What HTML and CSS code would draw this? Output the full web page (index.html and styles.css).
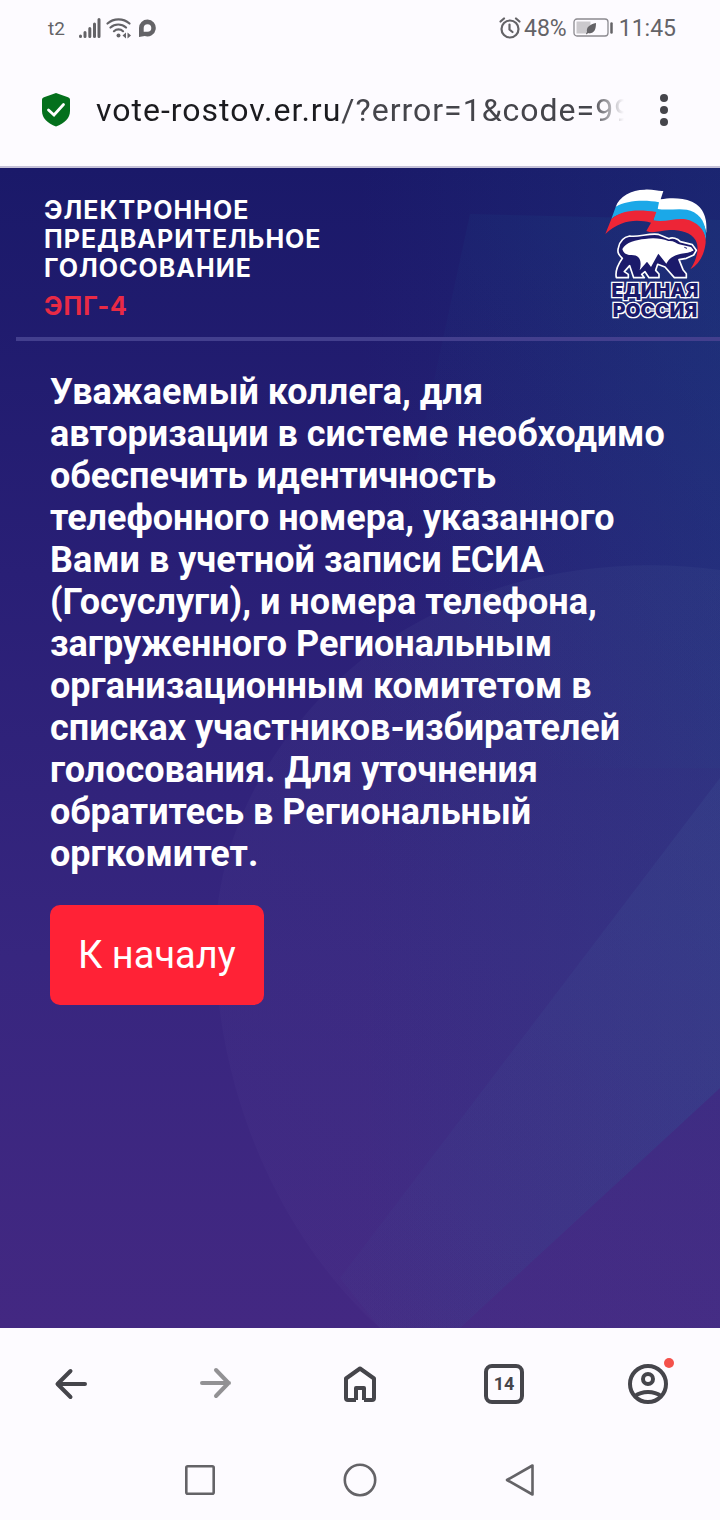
FILE: index.html
```html
<!DOCTYPE html>
<html lang="ru">
<head>
    <meta charset="UTF-8">
    <title>Электронное предварительное голосование</title>
    <meta name="viewport" content="width=device-width, initial-scale=1.0">
    <link rel="stylesheet" href="styles.css">
</head>
<body>
    <div class="status-bar">
        <div class="status-left">
            <span class="carrier">t2</span>
            <svg class="signal" width="22" height="22" viewBox="0 0 22 22" stroke="currentColor" stroke-width="3" stroke-linecap="round">
                <path d="M1.5 19v.5M6 15.500v4M10.800 11.500v8M15.500 7v12.500M20 2.500v17"/>
            </svg>
            <svg width="26" height="22" viewBox="0 0 26 22" fill="none" stroke="currentColor" stroke-width="2.200" stroke-linecap="round">
                <path d="M1.500 6.500a16.500 16.500 0 0 1 22 0M4.500 10.500a11.500 11.500 0 0 1 15.500 0M8 14.200a6.600 6.600 0 0 1 9 0"/>
                <circle cx="12.500" cy="18.500" r="2" fill="currentColor" stroke="none"/>
                <path d="M16.500 18.500l3.500-3v6zM25 18.500l-3.500-3v6z" fill="currentColor" stroke="none"/>
            </svg>
            <svg width="20" height="20" viewBox="0 0 20 20">
                <path d="M10.500 1.500a8.500 8.500 0 1 1-2.800 16.600L2 19V10A8.500 8.500 0 0 1 10.500 1.500zm0 4.700a3.800 3.800 0 0 0-3.800 3.800v3.800h3.800a3.800 3.800 0 0 0 0-7.600z" fill="currentColor"/>
            </svg>
        </div>
        <div class="status-right">
            <svg width="22" height="24" viewBox="0 0 22 24" fill="none" stroke="currentColor" stroke-width="2.200" stroke-linecap="round">
                <circle cx="11" cy="13" r="8.500"/>
                <path d="M10.500 8.500v5l3 2.500M1.500 5.500l3.500-3M20.500 5.500l-3.500-3"/>
            </svg>
            <span>48%</span>
            <svg class="battery" width="40" height="20" viewBox="0 0 40 20">
                <rect x="1" y="1" width="34" height="17" rx="3" fill="none" stroke="#8c8a90" stroke-width="1.300"/>
                <rect x="3.500" y="3.500" width="14" height="12" fill="#cbc9cd"/>
                <path d="M23 5c0 7-2 11-8 10l-1.500 1.500-.5-1 1-1.500c-1-5 3-7.500 9-9z" fill="currentColor"/>
                <path d="M38.500 5.500v9" stroke="currentColor" stroke-width="2.500" stroke-linecap="round"/>
            </svg>
            <span>11:45</span>
        </div>
    </div>

    <div class="address-bar">
        <svg width="32" height="36" viewBox="0 0 32 36">
            <path d="M16 1l12 4.300c1.300.5 2 1.200 2 2.700v11c0 7-5.500 12.500-14 15.500C7.500 31.500 2 26 2 19V8c0-1.500.7-2.200 2-2.700z" fill="#04701c"/>
            <path d="M8.500 18l5.500 5 9.500-10.500" fill="none" stroke="#fff" stroke-width="2.800" stroke-linecap="round"/>
        </svg>
        <div class="url"><span class="host">vote-rostov.er.ru</span>/?error=1&amp;code=99</div>
        <button class="menu" type="button" aria-label="Меню">
            <svg width="8" height="32" viewBox="0 0 8 32" fill="currentColor">
                <circle cx="4" cy="4" r="4"/>
                <circle cx="4" cy="16" r="4"/>
                <circle cx="4" cy="28" r="4"/>
            </svg>
        </button>
    </div>

    <main>
        <svg class="backdrop" viewBox="0 0 720 1160" preserveAspectRatio="none">
            <defs>
                <linearGradient id="glow" gradientUnits="userSpaceOnUse" x1="360" y1="0" x2="760" y2="0">
                    <stop offset="0" stop-color="#1c4a88" stop-opacity="0"/>
                    <stop offset="1" stop-color="#1c4a88" stop-opacity=".28"/>
                </linearGradient>
                <linearGradient id="ray" gradientUnits="userSpaceOnUse" x1="400" y1="340" x2="720" y2="170">
                    <stop offset="0" stop-color="#1c4a88" stop-opacity="0"/>
                    <stop offset="1" stop-color="#1c4a88" stop-opacity=".22"/>
                </linearGradient>
                <linearGradient id="disc" gradientUnits="userSpaceOnUse" x1="215" y1="900" x2="720" y2="500">
                    <stop offset="0" stop-color="#5a4a9a" stop-opacity=".1"/>
                    <stop offset="1" stop-color="#4a5a96" stop-opacity=".15"/>
                </linearGradient>
                <linearGradient id="band" gradientUnits="userSpaceOnUse" x1="350" y1="1100" x2="720" y2="700">
                    <stop offset="0" stop-color="#405898" stop-opacity=".06"/>
                    <stop offset="1" stop-color="#405898" stop-opacity=".2"/>
                </linearGradient>
            </defs>
            <path d="M360 0H720V920L460 1160H360z" fill="url(#glow)"/>
            <path d="M470 46L720 52V600H350z" fill="url(#ray)"/>
            <path d="M720 402C600 385 440 410 330 520C250 600 215 690 215 780C218 940 290 1080 380 1160H720z" fill="url(#disc)"/>
            <path d="M720 610L340 1110L380 1160H460L720 920z" fill="url(#band)"/>
        </svg>

        <header>
            <div class="title-block">
                <h1>Электронное<br>предварительное<br>голосование</h1>
                <p class="code">ЭПГ-4</p>
            </div>
            <svg class="logo" width="107" height="132" viewBox="40 25 321 396">
                <path d="M78 82C88 50 125 30 165 30C190 28 208 36 221 34L213 59C240 54 276 53 307 66C345 84 353 120 350 160C344 125 322 103 285 98C250 93 226 104 204 93L200 73C160 66 112 66 78 82z" fill="#fff"/>
                <path d="M78 82C110 62 165 60 208 68L204 88C245 94 282 80 313 98C344 116 350 145 349 182C342 150 325 130 293 124C260 118 228 132 190 124L196 101C150 94 98 92 65 118z" fill="#1ba8e8"/>
                <path d="M65 118C100 88 152 90 200 97L191 122C230 130 265 110 300 122C340 138 352 170 347 196C342 230 326 255 302 269C322 239 330 205 318 182C303 158 276 151 240 151C212 152 192 163 170 154L184 129C140 118 94 120 47 163z" fill="#ed2536"/>
                <path d="M86 205C90 184 104 172 120 169C145 174 175 160 205 164L238 177C248 172 263 176 272 186L308 195L320 212L312 226L290 236L268 240L280 270L290 282V294H254L226 262L204 254L198 272L208 283V294H178L166 276L156 284L164 294H132L120 258L104 276L116 284V294H80C76 276 84 256 98 236C88 226 82 219 86 205z" fill="#1b1a6b" stroke="#fff" stroke-width="5" stroke-linejoin="round"/>
                <path d="M98 208C108 188 140 180 166 178C190 173 216 176 236 184C250 182 260 190 268 194L304 202L312 212L304 218L274 222C254 226 238 236 230 252L206 222L184 262L172 246L150 272C158 242 149 226 126 226C110 227 101 220 98 208z" fill="#fff"/>
                <path d="M284 203l8 3M294 222l16-7" stroke="#1b1a6b" stroke-width="3"/>
                <g class="logo-text">
                    <text x="196" y="353" text-anchor="middle">ЕДИНАЯ</text>
                    <text x="196" y="411" text-anchor="middle">РОССИЯ</text>
                </g>
            </svg>
        </header>

        <section class="content">
            <p class="message">Уважаемый коллега, для авторизации в системе необходимо обеспечить идентичность телефонного номера, указанного Вами в учетной записи ЕСИА (Госуслуги), и номера телефона, загруженного Региональным организационным комитетом в списках участников-избирателей голосования. Для уточнения обратитесь в Региональный оргкомитет.</p>
            <button class="btn" type="button">К началу</button>
        </section>
    </main>

    <nav class="browser-nav">
        <button type="button" aria-label="Назад">
            <svg width="40" height="40" viewBox="0 0 40 40" fill="none" stroke="currentColor" stroke-width="4" stroke-linecap="round" stroke-linejoin="round">
                <path d="M33 20H6M18.500 7L5.500 20L18.500 33"/>
            </svg>
        </button>
        <button class="inactive" type="button" aria-label="Вперёд">
            <svg width="40" height="40" viewBox="0 0 40 40" fill="none" stroke="currentColor" stroke-width="4" stroke-linecap="round" stroke-linejoin="round">
                <path d="M6 19H33M20 6L32.500 19L20 32"/>
            </svg>
        </button>
        <button type="button" aria-label="Домой">
            <svg width="40" height="40" viewBox="0 0 40 40" fill="none" stroke="currentColor" stroke-width="4" stroke-linejoin="round">
                <path d="M16 36V24H24V36M16 36H8Q6 36 6 34V14.500L20 4.500L34 14.500V34Q34 36 32 36H24"/>
            </svg>
        </button>
        <button type="button" aria-label="Вкладки">
            <span class="tabs">14</span>
        </button>
        <button type="button" aria-label="Профиль">
            <span class="profile">
                <svg width="40" height="40" viewBox="0 0 40 40" fill="none" stroke="currentColor" stroke-width="4">
                    <circle cx="20" cy="20" r="18"/>
                    <circle cx="20" cy="15" r="5"/>
                    <path d="M7 32C14 26.500 26 26.500 33 32"/>
                </svg>
                <span class="dot"></span>
            </span>
        </button>
    </nav>

    <nav class="system-nav">
        <button type="button" aria-label="Недавние">
            <svg width="36" height="36" viewBox="0 0 36 36" fill="none" stroke="currentColor" stroke-width="2.600"><rect x="4.300" y="4.300" width="27.400" height="27.400" rx="1.500"/></svg>
        </button>
        <button type="button" aria-label="Главный экран">
            <svg width="36" height="36" viewBox="0 0 36 36" fill="none" stroke="currentColor" stroke-width="2.600"><circle cx="18" cy="18" r="15.200"/></svg>
        </button>
        <button type="button" aria-label="Назад">
            <svg width="36" height="36" viewBox="0 0 36 36" fill="none" stroke="currentColor" stroke-width="2.600" stroke-linejoin="round"><path d="M5 18L30.500 3.500V32.500z"/></svg>
        </button>
    </nav>
</body>
</html>
```
FILE: styles.css
```css
* {
    box-sizing: border-box;
}
body {
    font-family: Roboto, "Liberation Sans", sans-serif;
    margin: 0;
    min-height: 100vh;
    display: flex;
    flex-direction: column;
    background: #fdfbff;
    color: #45454b;
}
svg {
    display: block;
    flex-shrink: 0;
}
button {
    font-family: inherit;
    color: inherit;
    background: none;
    border: none;
    padding: 0;
    cursor: pointer;
}

/* phone status bar */
.status-bar {
    display: flex;
    justify-content: space-between;
    align-items: center;
    height: 56px;
    padding: 0 44px 0 48px;
    font-size: 23px;
    color: #646367;
}
.status-left,
.status-right {
    display: flex;
    align-items: center;
    gap: 5px;
}
.status-right {
    gap: 3px;
}
.carrier {
    font-size: 19px;
}
.signal {
    margin-left: 9px;
}
.battery {
    margin: 0 3px;
}

/* address bar */
.address-bar {
    display: flex;
    align-items: center;
    height: 112px;
    padding: 0 52px 2px 40px;
    border-bottom: 2px solid #c5c1d8;
}
.url {
    flex: 1;
    min-width: 0;
    margin: 0 36px 0 24px;
    font-size: 32px;
    letter-spacing: 1px;
    white-space: nowrap;
    overflow: hidden;
    mask-image: linear-gradient(to left, transparent, #000 32px);
}
.host {
    color: #1b1b1f;
}

/* page */
main {
    position: relative;
    flex: 1;
    background: linear-gradient(#1a1969, #291f76 35%, #37267f 68%, #432882);
    color: #fff;
}
.backdrop {
    position: absolute;
    top: 0;
    left: 0;
    width: 100%;
    height: 100%;
}
header {
    position: relative;
    display: flex;
    justify-content: space-between;
    margin-left: 16px;
    padding: 20px 10px 16px 28px;
    border-bottom: 4px solid #433f8e;
}
.title-block {
    padding-top: 8px;
    font-family: Inter, "Open Sans", sans-serif;
    font-size: 25px;
    line-height: 29px;
    letter-spacing: 1px;
    text-transform: uppercase;
}
h1 {
    margin: 0 0 9px;
    font-size: 25px;
    font-weight: 700;
}
.code {
    margin: 0;
    font-weight: 700;
    color: #e92a45;
}
.logo {
    overflow: visible;
}
.logo-text {
    font-family: Inter, "DejaVu Sans", sans-serif;
    font-size: 58px;
    font-weight: 900;
    fill: #1b1a6b;
    stroke: #fff;
    stroke-width: 8px;
    paint-order: stroke;
}
.content {
    position: relative;
    padding: 30px 50px;
}
.message {
    margin: 0 0 30px;
    font-size: 36px;
    font-weight: 700;
    line-height: 42px;
}
.btn {
    padding: 26px 28px;
    border-radius: 10px;
    background: #ff2236;
    color: #fff;
    font-size: 38px;
    line-height: 48px;
}

/* bottom bars */
.browser-nav,
.system-nav {
    display: flex;
}
.browser-nav {
    height: 112px;
}
.system-nav {
    height: 80px;
    padding: 0 120px;
    color: #646367;
}
.browser-nav button,
.system-nav button {
    flex: 1;
    display: flex;
    align-items: center;
    justify-content: center;
}
.browser-nav .inactive {
    color: #929194;
}
.tabs {
    width: 40px;
    height: 40px;
    border: 4px solid #45454b;
    border-radius: 8px;
    font-size: 18px;
    font-weight: 700;
    line-height: 32px;
}
.profile {
    position: relative;
}
.dot {
    position: absolute;
    top: -6px;
    right: -6px;
    width: 10px;
    height: 10px;
    border-radius: 50%;
    background: #f4514b;
}
```
